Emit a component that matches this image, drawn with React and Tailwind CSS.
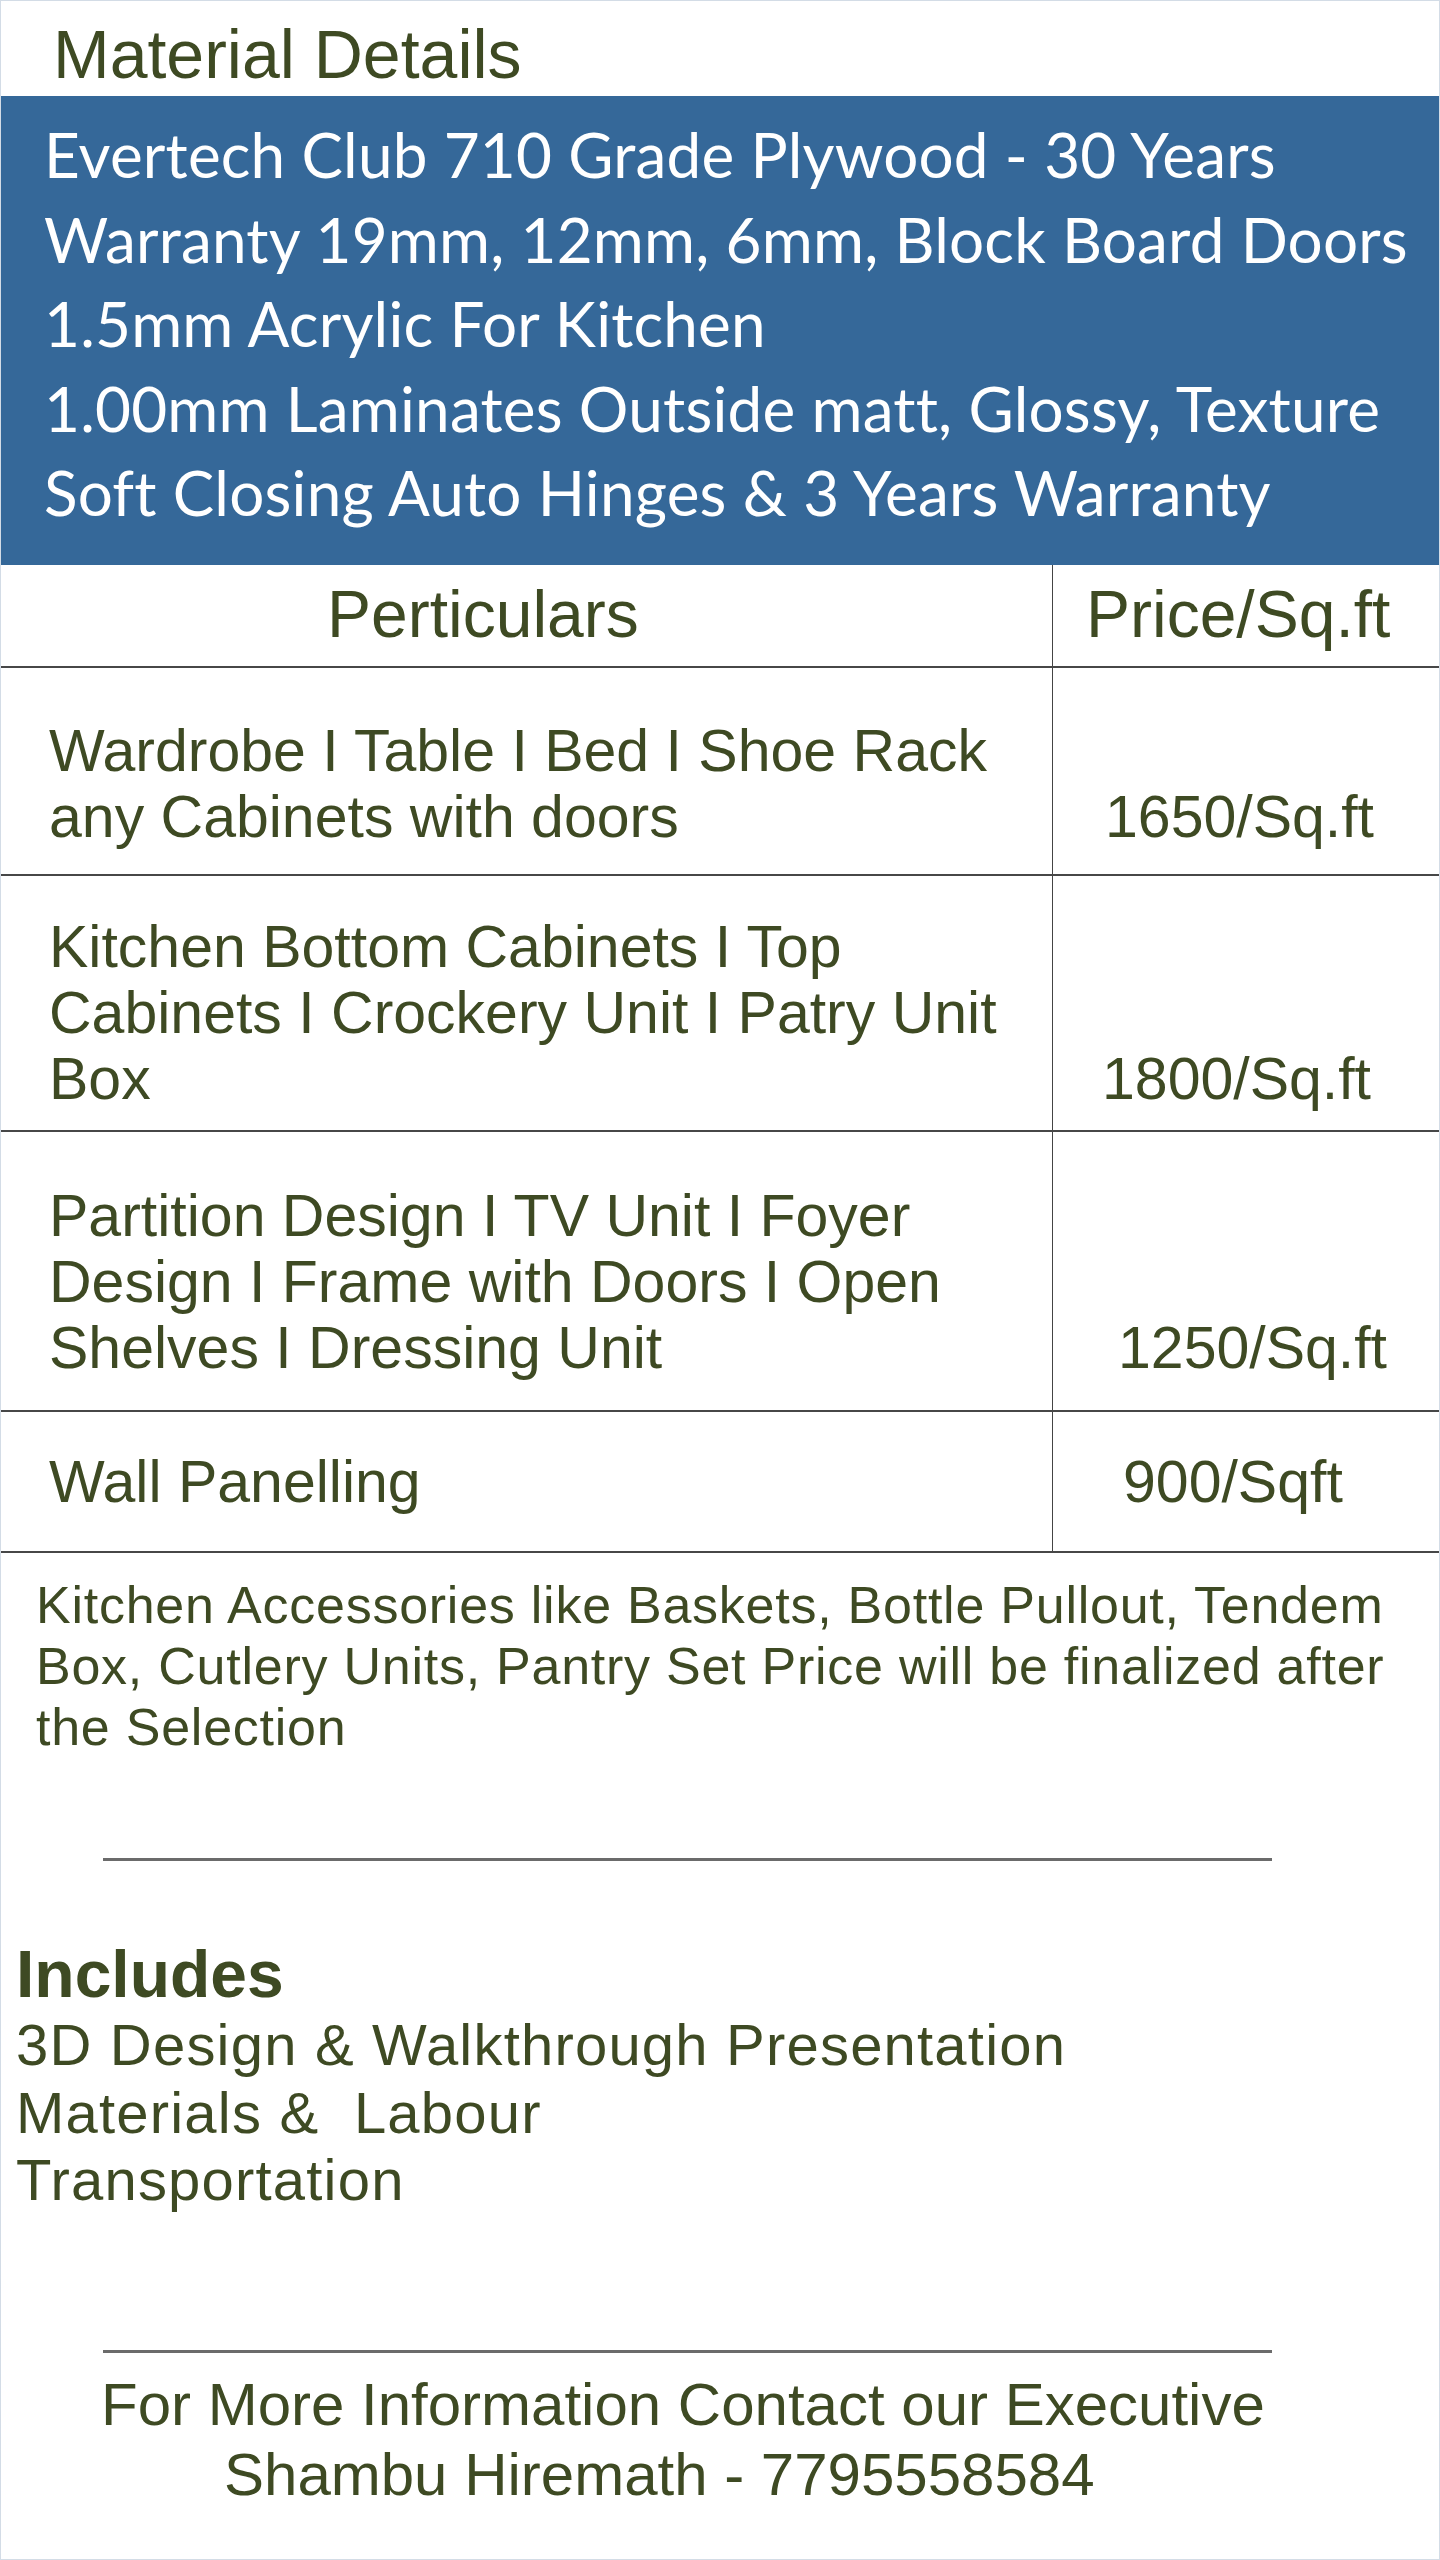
import React from "react";

const rows = [
  {
    lines: ["Wardrobe I Table I Bed I Shoe Rack", "any Cabinets with doors"],
    price: "1650/Sq.ft",
    h: "h-[208px]",
    pad: "pb-[24px] justify-end",
    pl: "pl-[52px]",
  },
  {
    lines: ["Kitchen Bottom Cabinets I Top", "Cabinets I Crockery Unit I Patry Unit", "Box"],
    price: "1800/Sq.ft",
    h: "h-[256px]",
    pad: "pb-[18px] justify-end",
    pl: "pl-[49px]",
  },
  {
    lines: ["Partition Design I TV Unit I Foyer", "Design I Frame with Doors I Open", "Shelves I Dressing Unit"],
    price: "1250/Sq.ft",
    h: "h-[280px]",
    pad: "pb-[29px] justify-end",
    pl: "pl-[65px]",
  },
  {
    lines: ["Wall Panelling"],
    price: "900/Sqft",
    h: "h-[141px]",
    pad: "justify-center",
    pl: "pl-[70px]",
  },
];

const materials = [
  "Evertech Club 710 Grade Plywood - 30 Years",
  "Warranty 19mm, 12mm, 6mm, Block Board Doors",
  "1.5mm Acrylic For Kitchen",
  "1.00mm Laminates Outside matt, Glossy, Texture",
  "Soft Closing Auto Hinges & 3 Years Warranty",
];

function PriceRow({ row }) {
  return (
    <div className={`grid grid-cols-[1052px_1fr] border-b-2 border-[#474747] ${row.h}`}>
      <div className={`flex flex-col border-r-[1.5px] border-[#444] pl-[48px] ${row.pad}`}>
        {row.lines.map((l) => (
          <div key={l} className="text-[59px] leading-[66px] whitespace-nowrap">
            {l}
          </div>
        ))}
      </div>
      <div className={`flex flex-col ${row.pad} ${row.pl}`}>
        <div className="text-[59px] leading-[66px] whitespace-nowrap">{row.price}</div>
      </div>
    </div>
  );
}

export default function App() {
  return (
    <div className="w-[1440px] h-[2560px] overflow-hidden border border-[#d3dce6] bg-white text-[#3e4a23] [font-family:'Liberation_Sans',Arial,sans-serif]">
      {/* title */}
      <div className="h-[95px] pl-[52px] pt-[19px]">
        <div className="text-[68px] leading-[68px]">Material Details</div>
      </div>

      {/* blue material block */}
      <div className="h-[469px] bg-[#356899] pl-[43px] pt-[16px] text-white overflow-hidden [font-family:Lato,'Open_Sans',sans-serif]">
        {materials.map((m) => (
          <div key={m} className="text-[62px] leading-[84.5px] tracking-[0.2px] whitespace-nowrap">
            {m}
          </div>
        ))}
      </div>

      {/* table */}
      <div className="grid grid-cols-[1052px_1fr] h-[103px] border-b-2 border-[#474747]">
        <div className="border-r-[1.5px] border-[#444] pl-[326px] pt-[16px]">
          <div className="text-[66px] leading-[66px]">Perticulars</div>
        </div>
        <div className="pl-[33px] pt-[16px]">
          <div className="text-[66px] leading-[66px] whitespace-nowrap">Price/Sq.ft</div>
        </div>
      </div>
      {rows.map((r) => (
        <PriceRow key={r.price} row={r} />
      ))}

      {/* note */}
      <div className="pl-[35px] pt-[22px] text-[52px] leading-[61px] tracking-[0.75px]">
        <div className="whitespace-nowrap">Kitchen Accessories like Baskets, Bottle Pullout, Tendem</div>
        <div className="whitespace-nowrap">Box, Cutlery Units, Pantry Set Price will be finalized after</div>
        <div className="whitespace-nowrap">the Selection</div>
      </div>

      <div className="ml-[102px] mt-[100px] h-[3px] w-[1169px] bg-[#6b6b6b]" />

      {/* includes */}
      <div className="pl-[15px] mt-[80px]">
        <div className="text-[66px] leading-[66px] font-bold">Includes</div>
        <div className="mt-[4px] text-[58px] leading-[67.5px] tracking-[1.2px]">
          <div className="whitespace-nowrap">3D Design &amp; Walkthrough Presentation</div>
          <div className="whitespace-pre">Materials &amp;  Labour</div>
          <div className="whitespace-nowrap">Transportation</div>
        </div>
      </div>

      <div className="ml-[102px] mt-[136px] h-[3px] w-[1169px] bg-[#6b6b6b]" />

      {/* contact */}
      <div className="mt-[17px] text-[60px] leading-[70px]">
        <div className="pl-[100px] whitespace-nowrap">For More Information Contact our Executive</div>
        <div className="pl-[223px] whitespace-nowrap">Shambu Hiremath - 7795558584</div>
      </div>
    </div>
  );
}
